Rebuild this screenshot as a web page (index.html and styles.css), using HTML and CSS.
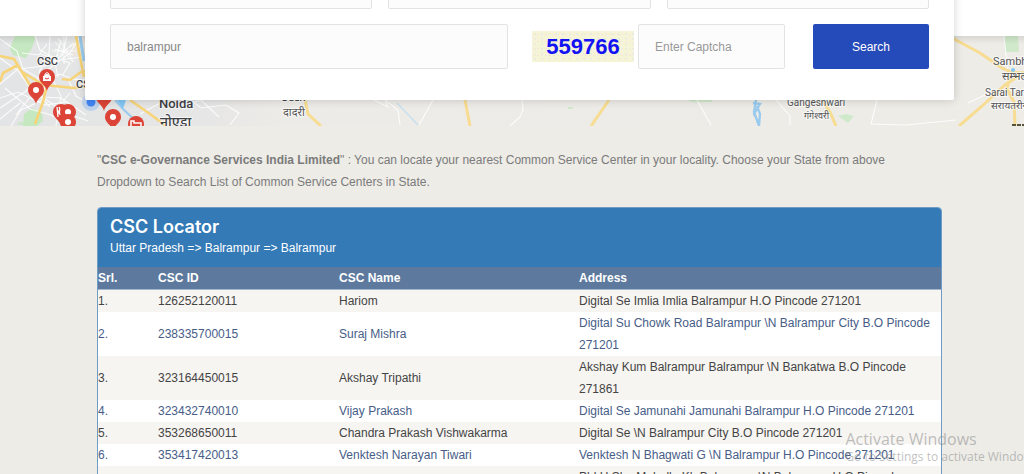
FILE: index.html
```html
<!DOCTYPE html>
<html lang="en">
<head>
<meta charset="utf-8">
<title>CSC Locator</title>
<link rel="stylesheet" href="styles.css">
</head>
<body>
<header class="hero">
  <div class="backdrop">
    <svg class="map" viewBox="0 0 1024 90" preserveAspectRatio="xMinYMin slice" role="img" aria-label="Map of service centers">
      <defs>
        <linearGradient id="land" x1="0" x2="1" y1="0" y2="0">
          <stop offset="0" stop-color="#e3e4e5"/><stop offset=".2" stop-color="#e6e6e6"/><stop offset=".27" stop-color="#edebe7"/><stop offset="1" stop-color="#edece7"/>
        </linearGradient>
        <linearGradient id="edge" x1="0" x2="0" y1="0" y2="1">
          <stop offset="0" stop-color="#000" stop-opacity=".09"/><stop offset="1" stop-color="#000" stop-opacity="0"/>
        </linearGradient>
        <g id="pin">
          <path d="M0 14C-1 8-8 6-8 0A8 8 0 1 1 8 0C8 6 1 8 0 14Z" fill="#db4437"/>
          <circle r="3" fill="#fff"/>
        </g>
      </defs>
      <rect width="1024" height="90" fill="url(#land)"/>
      <g fill="#c5e8c0">
        <path d="M15 0h21l-4 12-6 10-13-3-3-7zM24 78l8-6 10 4 1 9-6 5H23zM13 4l8-2-4 9z"/>
        <path d="M1004 0h14l1 16h-14zM688 64h24v2h-20zM838 80l8-2 8 2-6 7zM568 71h5v2h-5zM18 86h8v3h-8z" opacity=".75"/>
      </g>
      <path d="M72 5l14-5v22l-14-2z" fill="#ebe7df"/>
      <g fill="none" stroke="#fff" stroke-width="1.1" stroke-opacity=".85">
        <path d="M0 3l17 12 6 18 20 12 17-7 12 5 14 1M35 0l5 14 18 10 25-3M50 0l-1 18-10 18 6 18M67 0l-5 20-17 10-27 3L0 48M80 0L70 17 45 36 26 55 0 72M0 22l19 14 12 17 12 8 18 1 25 17M0 62l18-6 27 13 22-3M11 90l10-16 24-11 21 14 22 8M53 44l8 16-5 30M69 45l7 15 10 6M22 17l17 2 8-11M55 13l18 6M40 18l30 9-8 13M30 61l-14 18M61 4l-6 23 3 14"/>
        <path d="M64 0v28M52 15h24M55 6l18 20M73 7L54 26M58 2l16 24M54 22l20-14" stroke-width=".9"/>
        <path d="M0 83l20-16M5 52l25 21 21 6 19 11M35 55l15 16M70 57L57 72M140 78l20-11 25 2 16-5 18 17M188 62l13 10 25-3 13 8-9 12"/>
        <path d="M374 64l14 7-3-5M385 64l13 10 2 15M433 64l-14 25M522 64l1 10-3 7-10 9M697 64l14 25M776 64l14 16v9M877 64l-6 24 35 1 50-5M1004 0l4 38M1020 64l4 9M968 67l21-10"/>
      </g>
      <g fill="none" stroke="#f7d477" stroke-width="2.6">
        <path d="M0 20l14 3 8 13 9 15M22 36l22 13 30 3 12-2M0 46l3-9 15-8M47 49l-4 17-8 22M62 43l8 1 11-8 8-1M76 0l4 21 4 20M130 64l20 14 16 12"/>
        <path d="M305 64l3 14 13 12M465 64l5 26M609 64l-18 26M954 3l26 14 22 15 9 4 13 1M959 90l22-19 24-22 19-13M1010 37l-3 16 7 13 1 24M822 64l8 12 6 14" stroke="#f7dc91" stroke-width="3"/>
      </g>
      <g fill="none" stroke="#9acbee">
        <path d="M80 0l4 25" stroke-width="3"/><path d="M115 64l8 9 15 14" stroke-width="2"/>
        <path d="M397 67l21 22" stroke="#c6dfef" stroke-width="1.3"/>
        <path d="M756 64l-2 12 5 14 1-12-3-8M753 67l7 1-6 10 5 9" stroke-width="2.3"/>
      </g>
      <path d="M117 64h9l-3 9z" fill="#83c7f5"/>
      <circle cx="1013" cy="34" r="2" fill="#83c7f5"/>
      <circle cx="91" cy="66" r="9" fill="#a9c6ed" opacity=".65"/><circle cx="91" cy="66" r="4.5" fill="#4285f4"/>
      <use href="#pin" x="47" y="41"/>
      <path d="M43 40h8v5h-8z" fill="#fff"/><path d="M45 40v-2q2-3 4 0v2" fill="none" stroke="#fff"/><path d="M45 42q2 2 4 0" fill="none" stroke="#db4437"/>
      <use href="#pin" x="36" y="54"/>
      <use href="#pin" x="61" y="76"/><path d="M57 71l1 10M59 71l4 9" stroke="#fff" stroke-width="1.3"/>
      <use href="#pin" x="68" y="76"/><use href="#pin" x="68" y="86"/>
      <use href="#pin" x="104" y="61"/><use href="#pin" x="113" y="81"/>
      <circle cx="136" cy="88" r="8" fill="#db4437"/><path d="M131 90v-5h3v2h7v3" fill="none" stroke="#fff" stroke-width="1.5"/>
      <g class="places">
        <text x="37" y="29" font-size="11">CSC</text><text x="76" y="52" font-size="11">CSC</text>
        <text x="159" y="72" font-size="13">Noida</text><text x="160" y="91" font-size="14">नोएडा</text>
        <text x="282" y="65" font-size="10">Dadri</text><text x="283" y="80" font-size="11" class="minor">दादरी</text>
        <text x="787" y="70" font-size="10" class="minor">Gangeshwari</text><text x="804" y="83" font-size="9" class="minor">गंगेश्वरी</text>
        <text x="993" y="29" font-size="11" class="minor">Sambhal</text><text x="1002" y="44" font-size="11" class="minor">सम्भल</text>
        <text x="985" y="60" font-size="10" class="minor">Sarai Tarin</text><text x="991" y="73" font-size="10" class="minor">सरायतरीन</text>
      </g>
      <path d="M1012 89h12" stroke="#55523e" stroke-width="2" stroke-dasharray="4 1"/>
      <rect width="1024" height="8" fill="url(#edge)"/>
    </svg>
  </div>
  <form class="search-card">
    <div class="location-row">
      <select class="field" aria-label="State"></select>
      <select class="field" aria-label="District"></select>
      <select class="field" aria-label="Sub-district"></select>
    </div>
    <div class="search-row">
      <input class="field" type="text" value="balrampur" aria-label="Locality">
      <div class="captcha-group">
        <div class="captcha"><span>559766</span></div>
        <input class="field" type="text" placeholder="Enter Captcha" aria-label="Enter Captcha">
      </div>
      <button class="search-button" type="submit">Search</button>
    </div>
  </form>
</header>
<main class="content">
  <p class="intro">"<strong>CSC e-Governance Services India Limited</strong>" : You can locate your nearest Common Service Center in your locality. Choose your State from above Dropdown to Search List of Common Service Centers in State.</p>
  <section class="panel">
    <div class="panel-heading">
      <h1>CSC Locator</h1>
      <p>Uttar Pradesh =&gt; Balrampur =&gt; Balrampur</p>
    </div>
    <table class="centers">
      <colgroup><col class="col-serial"><col class="col-id"><col class="col-name"><col></colgroup>
      <thead><tr><th>Srl.</th><th>CSC ID</th><th>CSC Name</th><th>Address</th></tr></thead>
      <tbody>
        <tr><td>1.</td><td>126252120011</td><td>Hariom</td><td>Digital Se Imlia Imlia Balrampur H.O Pincode 271201</td></tr>
        <tr><td>2.</td><td>238335700015</td><td>Suraj Mishra</td><td>Digital Su Chowk Road Balrampur \N Balrampur City B.O Pincode 271201</td></tr>
        <tr><td>3.</td><td>323164450015</td><td>Akshay Tripathi</td><td>Akshay Kum Balrampur Balrampur \N Bankatwa B.O Pincode 271861</td></tr>
        <tr><td>4.</td><td>323432740010</td><td>Vijay Prakash</td><td>Digital Se Jamunahi Jamunahi Balrampur H.O Pincode 271201</td></tr>
        <tr><td>5.</td><td>353268650011</td><td>Chandra Prakash Vishwakarma</td><td>Digital Se \N Balrampur City B.O Pincode 271201</td></tr>
        <tr><td>6.</td><td>353417420013</td><td>Venktesh Narayan Tiwari</td><td>Venktesh N Bhagwati G \N Balrampur H.O Pincode 271201</td></tr>
        <tr><td></td><td></td><td></td><td>Pld H Sha Mahalla Kh Balrampur \N Balrampur H.O Pincode 271201</td></tr>
      </tbody>
    </table>
  </section>
</main>
<aside class="watermark"><p class="watermark-title">Activate Windows</p><p>Go to Settings to activate Windows.</p></aside>
</body>
</html>
```
FILE: styles.css
```css
* { box-sizing: border-box; }
html { height: 100%; overflow: hidden; }
body {
  margin: 0;
  height: 100%;
  overflow: hidden;
  position: relative;
  background: #edece7;
  color: #7b7b7b;
  font: 12px/22px "Liberation Sans", Arial, sans-serif;
}
p, h1 { margin: 0; }

.hero { display: grid; overflow: hidden; }
.backdrop, .search-card { grid-area: 1 / 1; }
.backdrop { padding-top: 36px; background: #fff; }
.map { display: block; width: 100%; height: 90px; }
.places { font-family: Roboto, "Noto Sans", sans-serif; font-weight: 500; fill: #3d4043; stroke: #fff; stroke-width: 2px; stroke-opacity: .6; paint-order: stroke; }
.places .minor { font-weight: 400; fill: #555; }

.search-card {
  position: relative;
  align-self: start;
  display: flex;
  flex-direction: column;
  gap: 15px;
  margin: -36px 70px 0 85px;
  padding: 0 25px 31px;
  background: #fff;
  border-radius: 2px;
  box-shadow: 0 0 10px rgba(0, 0, 0, .18);
}
.location-row { display: grid; grid-template-columns: repeat(3, 1fr); gap: 16px; }
.search-row { display: grid; grid-template-columns: 398fr 257fr 116fr; gap: 24px; }
.field {
  appearance: none;
  width: 100%;
  min-width: 0;
  height: 45px;
  padding: 0 16px;
  border: 1px solid #e3e3e3;
  border-radius: 2px;
  background: #fcfcfc;
  color: #888;
  font: inherit;
}
.field::placeholder { color: #999; opacity: 1; }
.captcha-group { display: grid; grid-template-columns: 102fr 147fr; gap: 4px; align-items: center; padding-right: 4px; }
.captcha {
  display: grid;
  place-items: center;
  height: 31px;
  background-color: #f6f3db;
  background-image:
    radial-gradient(circle, #f8f6c4 1px, transparent 1px),
    radial-gradient(circle, #e6ebe0 1px, transparent 1px),
    radial-gradient(circle, #f6e6d8 1px, transparent 1px);
  background-size: 5px 4px, 7px 5px, 4px 7px;
  color: #1212f5;
  font-size: 22px;
  font-weight: 700;
}
.search-button {
  height: 45px;
  border: 0;
  border-radius: 2px;
  background: #254aba;
  color: #fff;
  font: inherit;
}

.content { margin: 0 82px 0 97px; padding-top: 23px; }
.intro { margin-bottom: 14px; padding-right: 24px; }
.panel { border: 1px solid #6f9cc4; border-radius: 4px; overflow: hidden; background: #fff; }
.panel-heading { padding: 9px 12px 8px; background: #337ab7; color: #fff; }
.panel-heading h1 { font: 600 18px/20px Inter, sans-serif; }
.centers { width: 100%; border-collapse: collapse; table-layout: fixed; color: #475d88; }
.col-serial { width: 60px; }
.col-id { width: 181px; }
.col-name { width: 240px; }
.centers th, .centers td { padding: 0; text-align: left; }
.centers th { background: #5d7a9e; color: #fff; border-bottom: 1px solid #a5b7cc; }
.centers tbody tr:nth-child(odd) { background: #f7f5f2; color: #444; }

.watermark {
  position: absolute;
  right: -18px;
  bottom: 8px;
  color: rgba(130, 130, 130, .5);
  font: 12px/18px "Open Sans", sans-serif;
  white-space: nowrap;
  pointer-events: none;
}
.watermark-title { font-size: 16px; }
```
